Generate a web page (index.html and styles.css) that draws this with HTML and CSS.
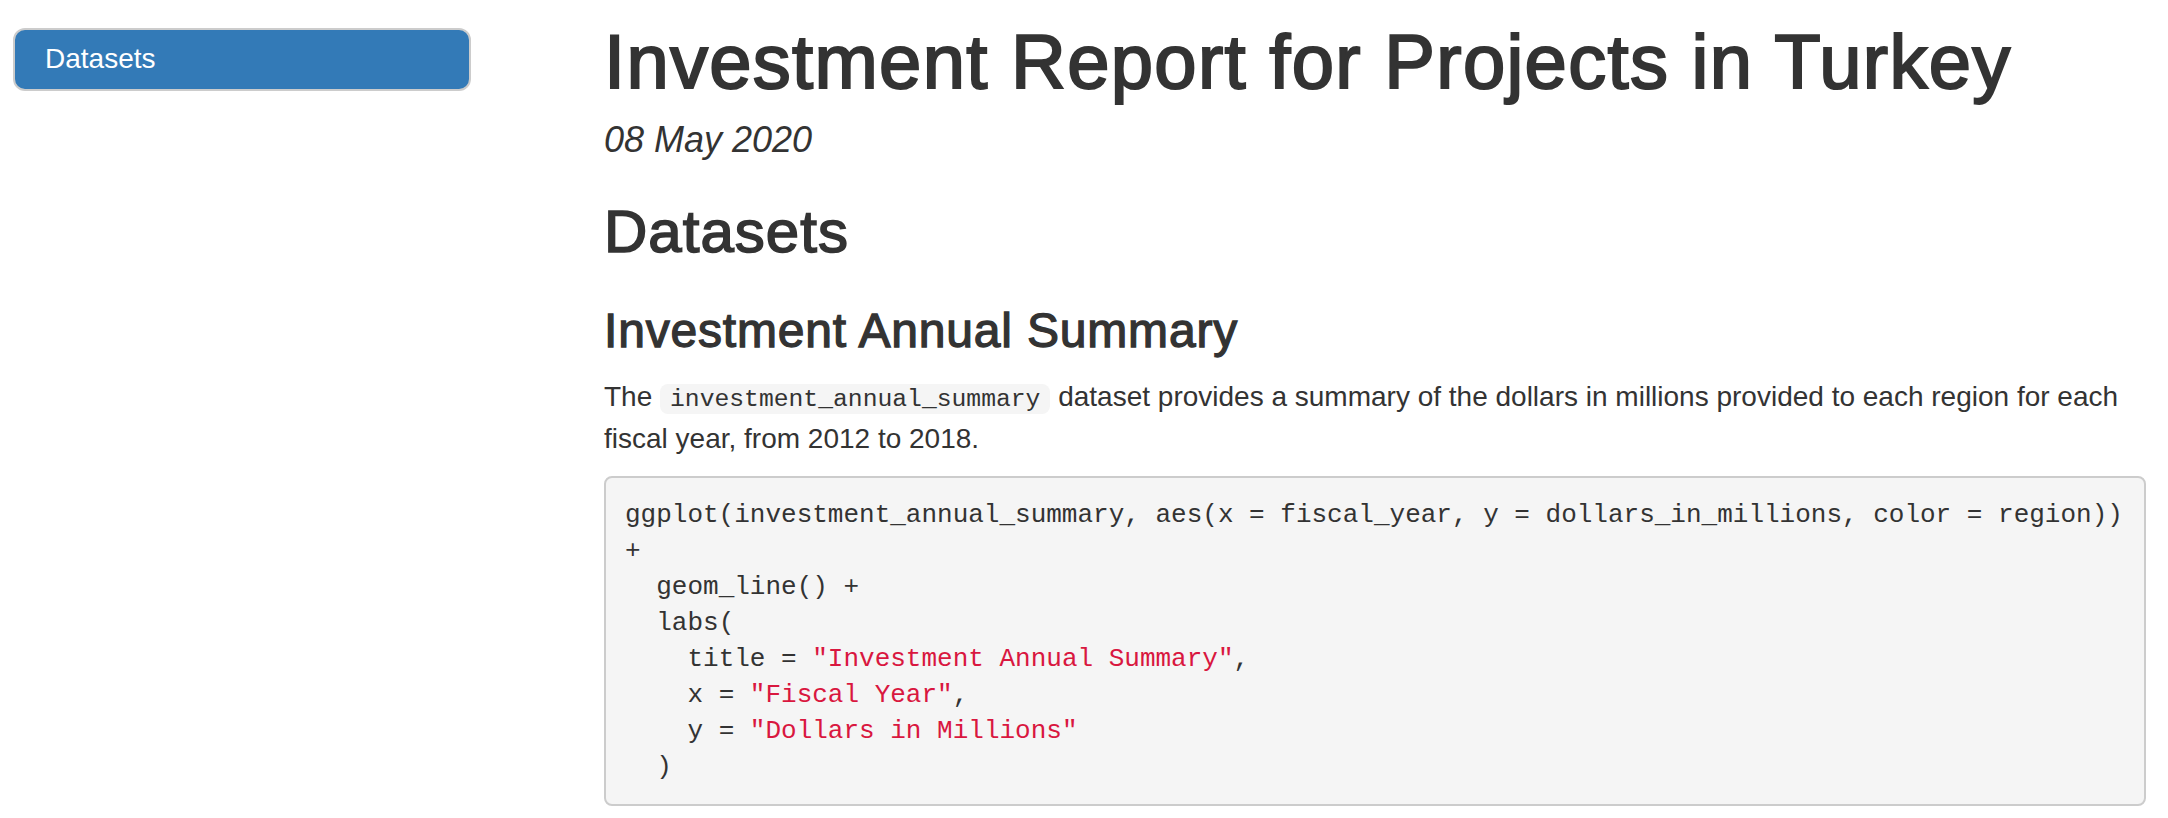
FILE: index.html
```html
<!DOCTYPE html>
<html>
<head>
<meta charset="utf-8">
<title>Investment Report for Projects in Turkey</title>
<link rel="stylesheet" href="styles.css">
</head>
<body>
<div class="layout">
  <nav class="toc">
    <div class="toc-item">Datasets</div>
  </nav>
  <main class="main">
    <h1 class="title">Investment Report for Projects in Turkey</h1>
    <h4 class="date">08 May 2020</h4>
    <h2 class="h2">Datasets</h2>
    <h3 class="h3">Investment Annual Summary</h3>
    <p class="para">The <code class="inline-code">investment_annual_summary</code> dataset provides a summary of the dollars in millions provided to each region for each fiscal year, from 2012 to 2018.</p>
    <pre class="code-block"><code>ggplot(investment_annual_summary, aes(x = fiscal_year, y = dollars_in_millions, color = region)) +
  geom_line() +
  labs(
    title = <span class="st">"Investment Annual Summary"</span>,
    x = <span class="st">"Fiscal Year"</span>,
    y = <span class="st">"Dollars in Millions"</span>
  )</code></pre>
  </main>
</div>
</body>
</html>
```

FILE: styles.css
```css
html, body {
  margin: 0;
  padding: 0;
  background: #ffffff;
}

body {
  font-family: "Liberation Sans", Arial, sans-serif;
  color: #333333;
  font-size: 28px;
  line-height: 40px;
}

.layout {
  display: flex;
  align-items: flex-start;
}

.toc {
  flex: 0 0 458px;
  margin-left: 13px;
  margin-top: 28px;
}

.toc-item {
  box-sizing: border-box;
  height: 63px;
  padding: 9px 30px 10px 30px;
  border: 2px solid #cccccc;
  border-radius: 12px;
  background: #337ab7;
  color: #ffffff;
  font-size: 28px;
  line-height: 40px;
}

.main {
  margin-left: 133px;
  width: 1542px;
}

.title,
.h2,
.h3 {
  font-weight: 400;
  letter-spacing: 0.017em;
  -webkit-text-stroke: 0.027em #333333;
}

.title {
  margin: 20px 0 16px 0;
  font-size: 76px;
  line-height: 1.1;
}

.date {
  margin: 0;
  font-size: 36px;
  line-height: 1.1;
  font-style: italic;
  font-weight: normal;
}

.h2 {
  margin: 40px 0 0 0;
  font-size: 60px;
  line-height: 1.1;
}

.h3 {
  margin: 40px 0 0 0;
  font-size: 48px;
  line-height: 1.1;
}

.para {
  margin: 19px 0 0 0;
}

.inline-code {
  font-family: "Liberation Mono", "Courier New", monospace;
  font-size: 24.7px;
  padding: 1px 10px;
  border-radius: 8px;
  background: #f5f5f5;
  color: #333333;
}

.code-block {
  box-sizing: border-box;
  margin: 17px 0 0 0;
  padding: 19px;
  border: 2px solid #cccccc;
  border-radius: 8px;
  background: #f5f5f5;
  font-family: "Liberation Mono", "Courier New", monospace;
  font-size: 26px;
  line-height: 36px;
  color: #333333;
  white-space: pre-wrap;
  word-wrap: break-word;
}

.code-block code {
  font-family: inherit;
}

.st {
  color: #d9173f;
}
```
